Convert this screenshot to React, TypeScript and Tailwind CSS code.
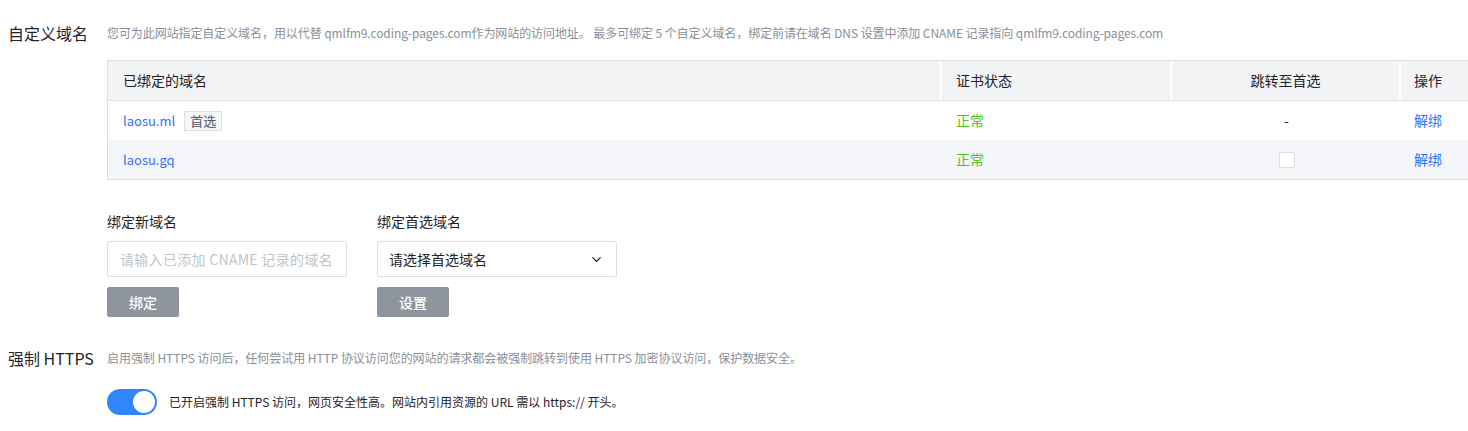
import { ChevronDown } from 'lucide-react'

const font = { fontFamily: '"Noto Sans CJK SC", "Noto Sans", sans-serif' }

function DomainTable() {
  return (
    <div className="mt-[16px] -mr-px border-y border-l border-[#dcdfe6] text-[14px]">
      {/* Header */}
      <div className="grid h-[39px] grid-cols-[834px_230px_229px_1fr] items-center bg-[#f2f3f5] text-[#1f2329]">
        <div className="flex h-full items-center border-r-2 border-white pl-[15px]">已绑定的域名</div>
        <div className="flex h-full items-center border-r-2 border-white pl-[14px]">证书状态</div>
        <div className="flex h-full items-center justify-center border-r-2 border-white">跳转至首选</div>
        <div className="flex h-full items-center pl-[13px]">操作</div>
      </div>
      {/* Row 1 */}
      <div className="grid h-[40px] grid-cols-[834px_230px_229px_1fr] items-center border-t border-[#dcdfe6] bg-white">
        <div className="flex items-center gap-[9px] pl-[15px]">
          <span className="text-[13px] text-[#3370ff]">laosu.ml</span>
          <span className="flex h-[20px] items-center border border-[#dcdfe6] bg-[#f5f6f8] px-[5px] text-[13px] text-[#4e5969]">首选</span>
        </div>
        <div className="pl-[14px] text-[#52c41a]">正常</div>
        <div className="text-center text-[#1f2329]">-</div>
        <div className="pl-[13px] text-[#3370ff]">解绑</div>
      </div>
      {/* Row 2 */}
      <div className="grid h-[39px] grid-cols-[834px_230px_229px_1fr] items-center bg-[#f5f6f9]">
        <div className="pl-[15px] text-[13px] text-[#3370ff]">laosu.gq</div>
        <div className="pl-[14px] text-[#52c41a]">正常</div>
        <div className="flex justify-center">
          <span className="block h-[16px] w-[16px] rounded-[2px] border border-[#dcdfe6] bg-white" />
        </div>
        <div className="pl-[13px] text-[#3370ff]">解绑</div>
      </div>
    </div>
  )
}

export default function App() {
  return (
    <div className="min-h-[431px] overflow-hidden bg-white pl-2 pt-[22px]" style={font}>
      {/* Custom domains */}
      <div className="flex">
        <div className="w-[99px] shrink-0 text-[16px] leading-[22px] text-[#1f2329]">自定义域名</div>
        <div className="min-w-0 flex-1">
          <p className="text-[12px] leading-[22px] tracking-[-0.08px] text-[#8a8f99]">
            您可为此网站指定自定义域名，用以代替 qmlfm9.coding-pages.com作为网站的访问地址。 最多可绑定 5 个自定义域名，绑定前请在域名 DNS 设置中添加 CNAME 记录指向 qmlfm9.coding-pages.com
          </p>
          <DomainTable />

          <div className="mt-[31px] flex gap-[30px]">
            <div className="w-[240px]">
              <div className="text-[14px] leading-[20px] text-[#1f2329]">绑定新域名</div>
              <input
                className="mt-[10px] h-[36px] w-full rounded-[2px] border border-[#dcdfe6] pl-[12px] pr-[8px] text-[14px] tracking-[0.3px] outline-none placeholder:text-[#c0c4cc]"
                placeholder="请输入已添加 CNAME 记录的域名"
              />
              <button className="mt-[10px] h-[30px] w-[72px] rounded-[2px] bg-[#8f959e] text-[14px] font-medium text-white">绑定</button>
            </div>
            <div className="w-[240px]">
              <div className="text-[14px] leading-[20px] text-[#1f2329]">绑定首选域名</div>
              <div className="mt-[10px] flex h-[36px] w-full items-center justify-between rounded-[2px] border border-[#dcdfe6] pl-[11px] pr-[12px] text-[14px] text-[#1f2329]">
                <span>请选择首选域名</span>
                <ChevronDown size={15} strokeWidth={2} className="text-[#1f2329]" />
              </div>
              <button className="mt-[10px] h-[30px] w-[72px] rounded-[2px] bg-[#8f959e] text-[14px] font-medium text-white">设置</button>
            </div>
          </div>
        </div>
      </div>

      {/* Force HTTPS */}
      <div className="mt-[30px] flex">
        <div className="w-[99px] shrink-0 text-[16px] leading-[22px] text-[#1f2329]">强制 HTTPS</div>
        <div className="min-w-0 flex-1">
          <p className="text-[12px] leading-[22px] tracking-[-0.05px] text-[#8a8f99]">
            启用强制 HTTPS 访问后，任何尝试用 HTTP 协议访问您的网站的请求都会被强制跳转到使用 HTTPS 加密协议访问，保护数据安全。
          </p>
          <div className="mt-[20px] flex items-center gap-[12px]">
            <span className="flex h-[26px] w-[50px] items-center justify-end rounded-full bg-[#3385ff] pr-[2px]">
              <span className="block h-[22px] w-[22px] rounded-full bg-white" />
            </span>
            <span className="text-[12px] text-[#1f2329]">已开启强制 HTTPS 访问，网页安全性高。网站内引用资源的 URL 需以 https:// 开头。</span>
          </div>
        </div>
      </div>
    </div>
  )
}
